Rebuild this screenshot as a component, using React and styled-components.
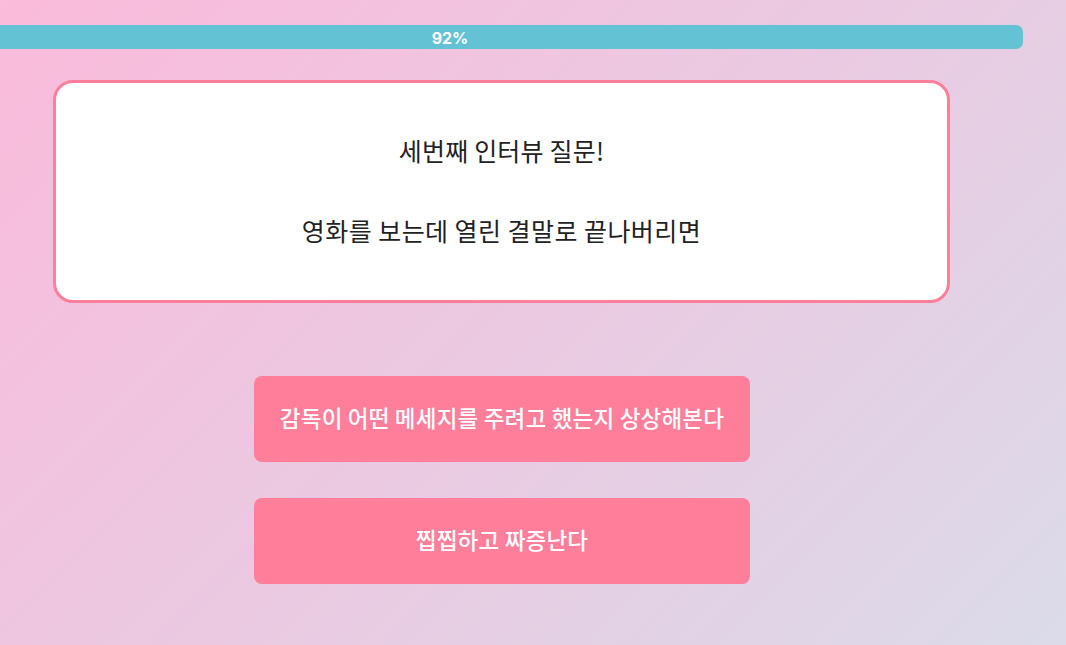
import React from "react";
import styled, { createGlobalStyle } from "styled-components";

const PINK = "#ff7e99";
const SKY = "#63c2d4";

const GlobalStyle = createGlobalStyle`
  html, body {
    margin: 0;
    padding: 0;
    height: 100%;
  }
  body {
    font-family: "Noto Sans CJK KR", "Noto Sans", sans-serif;
  }
`;

const Page = styled.div`
  width: 1066px;
  height: 645px;
  overflow: hidden;
  background: linear-gradient(135deg, #fbbbdb 0%, #eac9e1 50%, #dbdbe9 100%);
  display: flex;
  flex-direction: column;
  padding-top: 25px;
  box-sizing: border-box;
`;

const ProgressBar = styled.div`
  width: 1023px;
  height: 24px;
  background: ${SKY};
  border-radius: 0 7px 7px 0;
  display: flex;
  align-items: center;
`;

const ProgressLabel = styled.span`
  width: 900px;
  text-align: center;
  color: #fff;
  font-family: "Inter", "Liberation Sans", sans-serif;
  font-weight: 700;
  font-size: 16px;
  line-height: 24px;
  padding-top: 2px;
`;

const QuestionCard = styled.div`
  margin: 31px 0 0 53px;
  width: 897px;
  height: 223px;
  box-sizing: border-box;
  background: #fff;
  border: 3px solid ${PINK};
  border-radius: 20px;
  display: flex;
  flex-direction: column;
  align-items: center;
  justify-content: center;
  gap: 44px;
  color: #222;
  font-size: 25px;
  padding-bottom: 3px;
`;

const QuestionLine = styled.p`
  margin: 0;
  line-height: 36px;
  letter-spacing: ${(p) => p.$spacing || "0.2px"};
`;

const Answers = styled.div`
  margin: 73px 0 0 254px;
  display: flex;
  flex-direction: column;
  gap: 36px;
`;

const AnswerButton = styled.button`
  width: 496px;
  height: 86px;
  border: none;
  border-radius: 8px;
  background: ${PINK};
  color: #fff;
  font-family: "Noto Sans CJK KR", "Noto Sans", sans-serif;
  font-size: 22.5px;
  font-weight: 500;
  letter-spacing: 0.2px;
  cursor: pointer;
  padding: 0 0 5px;
`;

const App = () => (
  <>
    <GlobalStyle />
    <Page>
      <ProgressBar>
        <ProgressLabel>92%</ProgressLabel>
      </ProgressBar>
      <QuestionCard>
        <QuestionLine>세번째 인터뷰 질문!</QuestionLine>
        <QuestionLine $spacing="0.45px">영화를 보는데 열린 결말로 끝나버리면</QuestionLine>
      </QuestionCard>
      <Answers>
        <AnswerButton>감독이 어떤 메세지를 주려고 했는지 상상해본다</AnswerButton>
        <AnswerButton>찝찝하고 짜증난다</AnswerButton>
      </Answers>
    </Page>
  </>
);

export default App;
